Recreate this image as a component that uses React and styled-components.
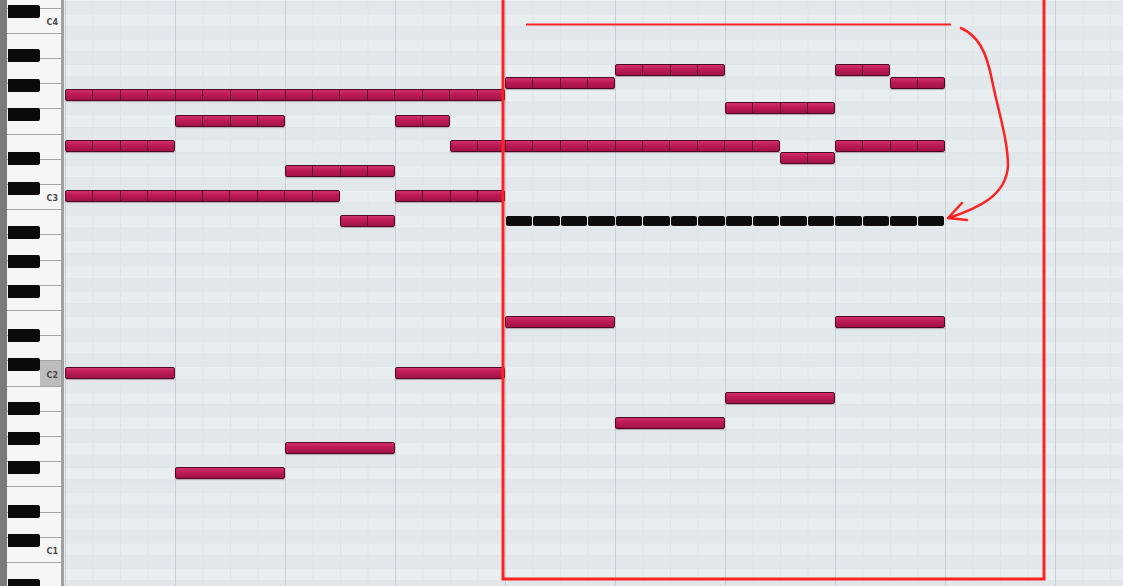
import React from 'react';
import styled, { createGlobalStyle } from 'styled-components';

const GlobalStyle = createGlobalStyle`
  html, body {
    margin: 0;
    padding: 0;
    overflow: hidden;
    background: #e8edf0;
  }
`;

// sizes
const OCTAVE = 176.4;
const ROW = 12.6;
const STEP = 27.5;

const Page = styled.div`
  position: relative;
  display: flex;
  width: 1123px;
  height: 586px;
  overflow: hidden;
  font-family: "DejaVu Sans", "Liberation Sans", sans-serif;
`;

const Keyboard = styled.div`
  flex: none;
  width: 54px;
  height: 100%;
  overflow: hidden;
  background: #f6f6f6;
  border-left: 7px solid #7b7b7b;
  border-right: 3px solid #a0a0a0;
  box-shadow: inset 1px 0 0 #4a4a4a;
`;

const KeyColumn = styled.div`
  display: flex;
  flex-direction: column;
  margin-top: ${-(OCTAVE - 33.8)}px;
`;

const Octave = styled.div`
  position: relative;
  flex: none;
  height: ${OCTAVE}px;
  display: flex;
  flex-direction: column;
`;

const WhiteKey = styled.div`
  flex: 1;
  box-sizing: border-box;
  border-bottom: 1px solid #a3a3a3;
  display: flex;
  align-items: flex-end;
  justify-content: flex-end;
  background: ${(p) => (p.$highlight ? 'linear-gradient(to right, #f6f6f6 33px, #bdbdbd 33px)' : '#f6f6f6')};
`;

const KeyLabel = styled.span`
  font-size: 8px;
  line-height: 8px;
  font-weight: bold;
  color: #4a4a4a;
  padding: 0 3px 6px 0;
`;

const BlackKey = styled.div`
  position: absolute;
  left: 1px;
  width: 32px;
  height: 13px;
  background: #0a0a0a;
  border-radius: 0 2px 2px 0;
`;

const Roll = styled.div`
  position: relative;
  flex: 1;
  height: 100%;
  overflow: hidden;
  box-sizing: border-box;
  padding: 1px 0 0 1px;
  display: grid;
  grid-template-columns: repeat(40, ${STEP}px);
  grid-template-rows: repeat(47, ${ROW}px);
  background-color: #e8edf0;
  background-image:
    linear-gradient(to right, #c9d0d5 1px, transparent 1px),
    linear-gradient(to right, #e0e5e8 1px, transparent 1px),
    linear-gradient(to bottom, #e0e5e9 1px, transparent 1px),
    linear-gradient(to bottom, rgba(205, 212, 218, 0.22) ${ROW}px, transparent ${ROW}px);
  background-size:
    110px 100%,
    ${STEP}px 100%,
    100% ${ROW}px,
    100% ${ROW * 2}px;
  background-position:
    1px 0,
    1px 0,
    0 1px,
    0 1px;
`;

const Note = styled.div`
  grid-row: ${(p) => p.$row + 1};
  grid-column: ${(p) => p.$start + 1} / span ${(p) => p.$len};
  align-self: center;
  height: 12px;
  display: flex;
  box-sizing: border-box;
  ${(p) =>
    p.$black
      ? `
    gap: 1px;
    padding: 0 1px;
  `
      : `
    border: 1px solid #4f0a25;
    border-radius: 2px;
    background: linear-gradient(to bottom, #d0306a 0%, #bc1a56 45%, #a11248 100%);
    box-shadow: 0 1px 1px rgba(80, 10, 40, 0.3);
  `}
`;

const Segment = styled.div`
  flex: 1;
  box-sizing: border-box;
  ${(p) =>
    p.$black
      ? `
    background: #0d0d0d;
    border-radius: 2px;
    margin: 1px 0;
  `
      : `
    border-right: 1px solid #5e0c2c;
    &:last-child { border-right: none; }
  `}
`;

const Annotation = styled.svg`
  position: absolute;
  left: 0;
  top: 0;
  width: 1123px;
  height: 586px;
  pointer-events: none;
`;

const notes = [
  { row: 5, start: 20, len: 4, seg: true },
  { row: 5, start: 28, len: 2, seg: true },
  { row: 6, start: 16, len: 4, seg: true },
  { row: 6, start: 30, len: 2, seg: true },
  { row: 7, start: 0, len: 16, seg: true },
  { row: 8, start: 24, len: 4, seg: true },
  { row: 9, start: 4, len: 4, seg: true },
  { row: 9, start: 12, len: 2, seg: true },
  { row: 11, start: 0, len: 4, seg: true },
  { row: 11, start: 14, len: 12, seg: true },
  { row: 11, start: 28, len: 4, seg: true },
  { row: 12, start: 26, len: 2, seg: true },
  { row: 13, start: 8, len: 4, seg: true },
  { row: 15, start: 0, len: 10, seg: true },
  { row: 15, start: 12, len: 4, seg: true },
  { row: 17, start: 10, len: 2, seg: true },
  { row: 17, start: 16, len: 16, black: true },
  { row: 25, start: 16, len: 4 },
  { row: 25, start: 28, len: 4 },
  { row: 29, start: 0, len: 4 },
  { row: 29, start: 12, len: 4 },
  { row: 31, start: 24, len: 4 },
  { row: 33, start: 20, len: 4 },
  { row: 35, start: 8, len: 4 },
  { row: 37, start: 4, len: 4 },
];

const octaves = [4, 3, 2, 1, 0];
const whiteNames = ['B', 'A', 'G', 'F', 'E', 'D', 'C'];
const blackSemis = [1, 3, 6, 8, 10];

const App = () => {
  return (
    <Page>
      <GlobalStyle />
      <Keyboard>
        <KeyColumn>
          {octaves.map((oct) => (
            <Octave key={oct}>
              {whiteNames.map((name) => (
                <WhiteKey key={name} $highlight={name === 'C' && oct === 2}>
                  {name === 'C' && oct > 0 && <KeyLabel>C{oct}</KeyLabel>}
                </WhiteKey>
              ))}
              {blackSemis.map((s) => (
                <BlackKey key={s} style={{ bottom: (s + 0.5) * (OCTAVE / 12) - 6.5 }} />
              ))}
            </Octave>
          ))}
        </KeyColumn>
      </Keyboard>

      <Roll>
        {notes.map((n, i) => (
          <Note key={i} $row={n.row} $start={n.start} $len={n.len} $black={n.black}>
            {Array.from({ length: n.seg || n.black ? n.len : 1 }).map((_, j) => (
              <Segment key={j} $black={n.black} />
            ))}
          </Note>
        ))}
      </Roll>

      <Annotation viewBox="0 0 1123 586">
        <rect x="503" y="-10" width="541" height="589" fill="none" stroke="#ff2222" strokeWidth="3" />
        <line x1="526" y1="24.5" x2="951" y2="24.5" stroke="#ff2222" strokeWidth="2" />
        <path
          d="M961 28 C978 36 986 50 992 80 C998 110 1008 140 1008 166 C1006 196 978 208 949 218"
          fill="none"
          stroke="#ff2222"
          strokeWidth="2.5"
          strokeLinecap="round"
        />
        <path
          d="M962 203 L948 218 L967 220"
          fill="none"
          stroke="#ff2222"
          strokeWidth="2.5"
          strokeLinecap="round"
          strokeLinejoin="round"
        />
      </Annotation>
    </Page>
  );
};

export default App;
